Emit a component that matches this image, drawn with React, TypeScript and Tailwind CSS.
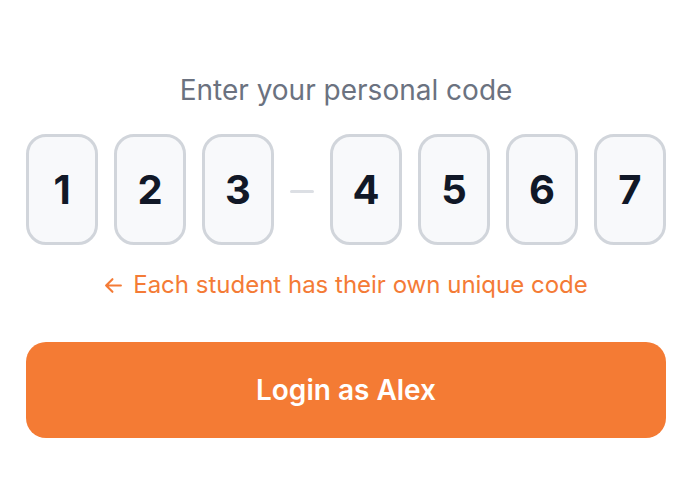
import React from "react";

const Box = ({ d }: { d: string }) => (
  <div className="w-[72px] h-[111px] rounded-[20px] border-[3px] border-[#d1d5db] bg-[#f8f9fb] flex items-center justify-center text-[40px] font-bold text-[#111827]">
    {d}
  </div>
);

export default function App() {
  return (
    <div className="w-[700px] h-[500px] bg-white" style={{ fontFamily: "Inter, 'Noto Sans', sans-serif" }}>
      <div className="w-[640px] ml-[26px] pt-[71px] flex flex-col items-center">
        <div className="text-[28px] leading-[38px] text-[#6b7280]">Enter your personal code</div>
        <div className="mt-[25px] flex items-center gap-4">
          <Box d="1" />
          <Box d="2" />
          <Box d="3" />
          <div className="w-6 h-[3px] mt-[4px] bg-[#dcdfe4] rounded" />
          <Box d="4" />
          <Box d="5" />
          <Box d="6" />
          <Box d="7" />
        </div>
        <div className="mt-[24px] text-[24px] leading-[32px] text-[#f47b36] flex items-center gap-[10px]">
          <svg width="19" height="19" viewBox="0 0 18 18" fill="none" stroke="currentColor" strokeWidth="2" strokeLinecap="round" strokeLinejoin="round">
            <path d="M16 9H2M8 3L2 9l6 6" />
          </svg>
          <span>Each student has their own unique code</span>
        </div>
        <button className="mt-[41px] w-[640px] h-[96px] rounded-[20px] bg-[#f47b34] text-white text-[28px] font-semibold flex items-center justify-center">
          Login as Alex
        </button>
      </div>
    </div>
  );
}
